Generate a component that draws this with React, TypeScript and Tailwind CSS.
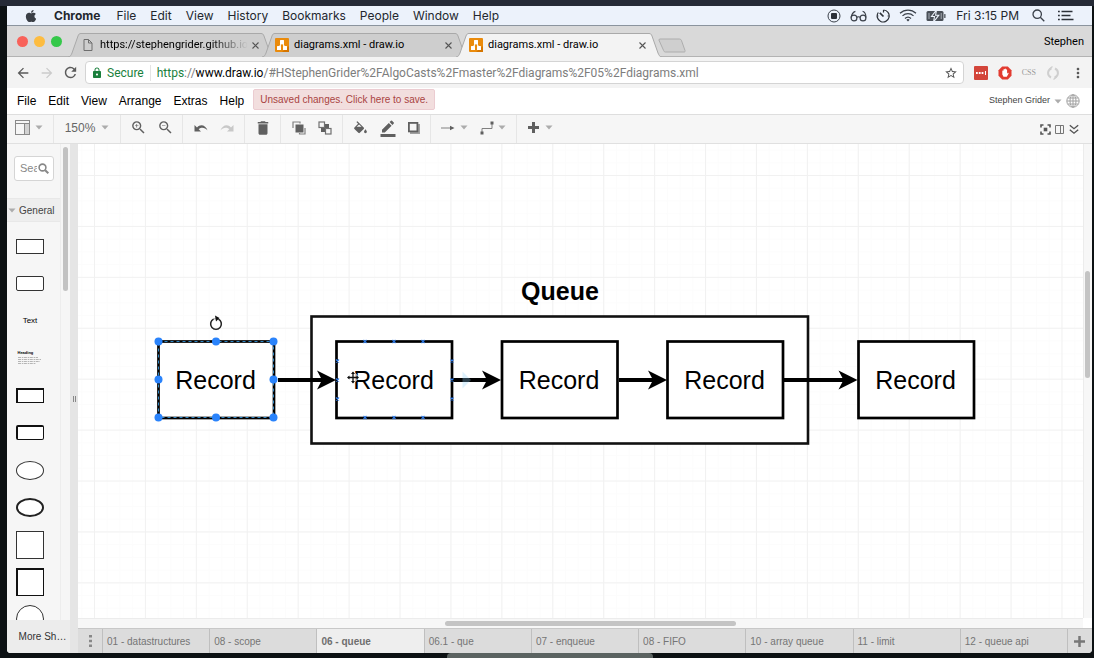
import React from "react";
import { FaApple } from "react-icons/fa";
import {
  MdDelete,
  MdZoomIn,
  MdZoomOut,
  MdBorderColor,
  MdLock,
  MdStarBorder,
  MdRefresh,
  MdArrowBack,
  MdArrowForward,
  MdMoreVert,
} from "react-icons/md";

const menuItems = ["File", "Edit", "View", "History", "Bookmarks", "People", "Window", "Help"];
const appMenu = ["File", "Edit", "View", "Arrange", "Extras", "Help"];
const pages = [
  "01 - datastructures",
  "08 - scope",
  "06 - queue",
  "06.1 - que",
  "07 - enqueue",
  "08 - FIFO",
  "10 - array queue",
  "11 - limit",
  "12 - queue api",
];

function Caret() {
  return (
    <svg width="8" height="5" viewBox="0 0 8 5" className="shrink-0 fill-[#acacac]">
      <path d="M0.5 0.5h7L4 4.5z" />
    </svg>
  );
}

function RecordIcon() {
  return (
    <svg width="14" height="14" viewBox="0 0 14 14" fill="none" stroke="#3b414a">
      <circle cx="7" cy="7" r="6" />
      <rect x="4" y="4" width="6" height="6" rx="1" fill="#2c3138" stroke="none" />
    </svg>
  );
}

function GlassesIcon() {
  return (
    <svg width="17" height="12" viewBox="0 0 17 12" fill="none" stroke="#3b414a" strokeWidth="1.2">
      <circle cx="4" cy="8" r="2.9" />
      <circle cx="13" cy="8" r="2.9" />
      <path d="M6.8 7.4c.8-.9 2.6-.9 3.4 0M1.1 7.5C1.6 4.5 3 2 5.4 1.3M15.9 7.5c0-3-1-5.5-3.3-6.2" />
    </svg>
  );
}

function TimerIcon() {
  return (
    <svg width="14" height="14" viewBox="0 0 14 14" fill="none" stroke="#2c3138" strokeWidth="1.2">
      <path d="M7.5 1A6 6 0 1 1 2.3 3.5" />
      <path d="M7.5 1v2.6" />
      <path d="M3.8 3.8L7.5 7.5" strokeWidth="1.7" />
      <path d="M1 7h1.5M11.5 7h1.5" strokeWidth="0.8" />
    </svg>
  );
}

function WifiIcon() {
  return (
    <svg width="18" height="13" viewBox="0 0 18 13" fill="none" stroke="#3b414a" strokeWidth="1.3">
      <path d="M1 4.3a11.5 11.5 0 0 1 16 0M3.5 6.9a8 8 0 0 1 11 0M6 9.4a4.5 4.5 0 0 1 6 0" />
      <path d="M7.3 10.8a2.5 2.5 0 0 1 3.4 0L9 12.6z" fill="#3b414a" stroke="none" />
    </svg>
  );
}

function BatteryIcon() {
  return (
    <svg width="20" height="12" viewBox="0 0 20 12">
      <rect x="0.5" y="1" width="17" height="10" rx="1.5" fill="#4a5058" />
      <rect x="18.2" y="4" width="1.3" height="4" rx="0.6" fill="#4a5058" />
      <path d="M10.5 0L5.5 6.5h3L7.5 12l5.3-6.8H9.6z" fill="#4a5058" stroke="#ecf2fb" strokeWidth="1.1" />
      <path d="M3 3v6M15.2 3v6" stroke="#a9afb7" strokeWidth="1" />
    </svg>
  );
}

function ListIcon() {
  return (
    <svg width="16" height="11" viewBox="0 0 16 11" fill="none" stroke="#2c3138" strokeWidth="1.5">
      <path d="M0 1.5h1.8M3.5 1.5h11M0 5.5h1.8M3.5 5.5h9M0 9.5h1.8M3.5 9.5h12" />
    </svg>
  );
}

function SystemBar() {
  return (
    <header className="flex h-5 shrink-0 items-center justify-between border-b border-[#8b949e] bg-[#ecf2fb] pl-[17px] pr-[18px] font-['Inter','Liberation_Sans',sans-serif] text-xs text-[#23272e]">
      <div className="flex items-center gap-4">
        <FaApple size={14} className="text-[#3a3f46]" />
        <button className="font-bold">Chrome</button>
        <nav aria-label="System" className="flex items-center gap-[14px]">
          {menuItems.map((m) => (
            <button key={m}>{m}</button>
          ))}
        </nav>
      </div>
      <div className="flex items-center gap-[10px]">
        <div className="flex items-center gap-[9px]">
          <RecordIcon />
          <GlassesIcon />
          <TimerIcon />
          <WifiIcon />
          <BatteryIcon />
        </div>
        <div className="flex items-center gap-[13px]">
          <span>Fri 3:15 PM</span>
          <svg width="13" height="13" viewBox="0 0 13 13" fill="none" stroke="#3b414a" strokeWidth="1.3">
            <circle cx="5.2" cy="5.2" r="4.2" />
            <path d="M8.3 8.3l4 4" />
          </svg>
          <ListIcon />
        </div>
      </div>
    </header>
  );
}

function DrawLogo() {
  return (
    <svg width="14" height="14" viewBox="0 0 14 14" className="shrink-0">
      <rect width="14" height="14" rx="1" fill="#ea8b0c" />
      <path d="M7 14l7-6v6z" fill="#d57500" />
      <path d="M7 4L4 10M7 4l3 6" stroke="#fff" strokeWidth="1.2" />
      <rect x="5" y="2" width="4" height="4" rx="0.5" fill="#fff" />
      <rect x="2" y="8" width="4" height="4" rx="0.5" fill="#fff" />
      <rect x="8" y="8" width="4" height="4" rx="0.5" fill="#fff" />
    </svg>
  );
}

function FileIcon() {
  return (
    <svg width="14" height="14" viewBox="0 0 14 14" fill="none" stroke="#6e6e6e" className="shrink-0">
      <path d="M3 1.5h4.5l3.5 3.5v7.5H3z M7.5 1.5v3.5h3.5" />
    </svg>
  );
}

function BrowserTab({ title, file, active }: { title: string; file?: boolean; active?: boolean }) {
  return (
    <div className={active ? "relative z-10 -mr-3 h-6 w-[206px]" : "relative -mr-3 h-6 w-[206px]"}>
      <svg
        viewBox="0 0 206 24"
        preserveAspectRatio="none"
        className="absolute inset-0 h-full w-full"
        fill={active ? "#f3f3f3" : "#cecece"}
        stroke="#a9a9a9"
      >
        <path d="M0 24C3 23.5 3 22 4 20L10 3C10.7 1 11.5 0.5 13 0.5H193C194.5 0.5 195.3 1 196 3L202 20C203 22 203 23.5 206 24" />
      </svg>
      <div className="relative flex h-full items-center pl-[13px] pr-[16px]">
        {file ? <FileIcon /> : <DrawLogo />}
        <button
          className={
            file
              ? "ml-[5px] flex-1 bg-linear-to-r from-black from-75% to-transparent bg-clip-text text-left whitespace-nowrap text-transparent"
              : "ml-[5px] flex-1 text-left whitespace-nowrap text-black"
          }
        >
          {title}
        </button>
        <button aria-label={"Close " + title} className="ml-1">
          <svg width="7" height="7" viewBox="0 0 7 7" stroke="#555" strokeWidth="1.1">
            <path d="M0.5 0.5l6 6M6.5 0.5l-6 6" />
          </svg>
        </button>
      </div>
    </div>
  );
}

function TabStrip() {
  return (
    <div className="flex h-[31px] shrink-0 items-end border-b border-[#b3b3b3] bg-[#d9d9d9] font-['Roboto','Liberation_Sans',sans-serif] text-[11px]">
      <div className="flex items-center gap-[6px] self-center pl-[10px]">
        <button aria-label="Close" className="size-[11px] rounded-full bg-[#f8625a]" />
        <button aria-label="Minimise" className="size-[11px] rounded-full bg-[#fdbc40]" />
        <button aria-label="Zoom" className="size-[11px] rounded-full bg-[#35c84a]" />
      </div>
      <div className="-mb-px ml-[6px] flex">
        <BrowserTab title="https://stephengrider.github.io" file />
        <BrowserTab title="diagrams.xml - draw.io" />
        <BrowserTab title="diagrams.xml - draw.io" active />
      </div>
      <button aria-label="New tab" className="mb-[3px] ml-2">
        <svg width="28" height="15" viewBox="0 0 28 15" fill="#cfcfcf" stroke="#adadad">
          <path d="M1.5 1H21.5C22.5 1 23 1.5 23.4 2.3L27 12.5C27.3 13.5 27 14 26 14H7.5C6.5 14 6 13.5 5.6 12.5L0.9 2Z" />
        </svg>
      </button>
      <span className="mr-2 mb-2 ml-auto leading-3 text-black">Stephen</span>
    </div>
  );
}

function AddressRow() {
  return (
    <div className="flex h-[31px] shrink-0 items-center bg-[#f3f3f3] pr-[6px] pl-2 font-['Roboto','Liberation_Sans',sans-serif] text-xs">
      <button aria-label="Back" className="text-[#5a5a5a]">
        <MdArrowBack size={16} />
      </button>
      <button aria-label="Forward" className="ml-2 text-[#cbcbcb]">
        <MdArrowForward size={16} />
      </button>
      <button aria-label="Reload" className="ml-[7px] text-[#5a5a5a]">
        <MdRefresh size={17} />
      </button>
      <div className="ml-[6px] flex h-[23px] min-w-0 flex-1 items-center rounded-sm border border-[#d4d4d4] bg-white px-[5px]">
        <MdLock size={12} className="shrink-0 text-[#1a7f3c]" />
        <span className="ml-1 text-[#1a7f3c]">Secure</span>
        <span className="mx-[6px] h-4 w-px bg-[#e4e4e4]" />
        <div
          role="textbox"
          aria-label="Address"
          contentEditable
          suppressContentEditableWarning
          className="min-w-0 flex-1 overflow-hidden whitespace-nowrap text-[#7d7d7d] outline-none"
        >
          <span className="text-[#1a7f3c]">https</span>://<span className="text-black">www.draw.io</span>
          /#HStephenGrider%2FAlgoCasts%2Fmaster%2Fdiagrams%2F05%2Fdiagrams.xml
        </div>
        <button aria-label="Bookmark this page" className="text-[#555]">
          <MdStarBorder size={14} />
        </button>
      </div>
      <div className="ml-[10px] flex items-center gap-[10px]">
        <button aria-label="Password manager">
          <svg width="14" height="14" viewBox="0 0 14 14">
            <rect width="14" height="14" rx="1" fill="#d3453a" />
            <path d="M2 6h1.8v2H2zM4.8 6h1.8v2H4.8zM7.6 6h1.8v2H7.6zM11 5h1v4h-1z" fill="#fff" />
          </svg>
        </button>
        <button aria-label="Ad blocker">
          <svg width="14" height="14" viewBox="0 0 14 14">
            <path d="M4.2 0.5h5.6l3.7 3.7v5.6l-3.7 3.7H4.2L0.5 9.8V4.2z" fill="#e23b30" />
            <path
              d="M4.3 8.5V4.8q.6-.8 1.2 0V6.5V3.5q.6-.8 1.2 0V6V3q.6-.8 1.2 0V6V3.7q.6-.8 1.2 0V7.7l.8-.9q.9-.2.7.6L8.8 10.8H5.5z"
              fill="#fff"
            />
          </svg>
        </button>
        <button className="font-['Liberation_Serif',serif] text-[8px] leading-3 text-[#999]">CSS</button>
        <button aria-label="Sync">
          <svg width="14" height="14" viewBox="0 0 14 14" fill="none" stroke="#cfcfcf" strokeWidth="2">
            <path d="M5 11.5C1 9.5 1 4 5.5 2.2M9 2.5c4 2 4 7.5-.5 9.3" />
            <path d="M6.5 0.5L3.5 3M7.5 13.5l3-2.5" strokeWidth="1.3" />
          </svg>
        </button>
        <button aria-label="Chrome menu" className="text-[#555]">
          <MdMoreVert size={16} />
        </button>
      </div>
    </div>
  );
}

function AppMenu() {
  return (
    <div className="flex h-[27px] shrink-0 items-center border-b border-[#dedede] bg-white pl-[10px] pr-3">
      <nav aria-label="Editor" className="flex gap-3 text-xs text-black">
        {appMenu.map((m) => (
          <button key={m}>{m}</button>
        ))}
      </nav>
      <button className="mb-[3px] ml-[9px] h-[21px] rounded-xs border border-[#ebccd1] bg-[#f2dede] px-[6px] text-[10px] text-[#a94442]">
        Unsaved changes. Click here to save.
      </button>
      <button className="ml-auto flex items-center gap-1 text-[9px] text-[#444]">
        Stephen Grider <Caret />
      </button>
      <button aria-label="Language" className="ml-1">
        <svg width="14" height="14" viewBox="0 0 14 14" fill="none" stroke="#a0a0a0">
          <circle cx="7" cy="7" r="6.2" />
          <ellipse cx="7" cy="7" rx="3" ry="6.2" />
          <path d="M1 7h12M1.8 4h10.4M1.8 10h10.4M7 1v12" />
        </svg>
      </button>
    </div>
  );
}

function Group({ className, children }: { className: string; children: React.ReactNode }) {
  return <div className={"flex h-full items-center border-r border-[#e6e6e6] pb-[3px] " + className}>{children}</div>;
}

function Toolbar() {
  return (
    <div className="flex h-[29px] shrink-0 items-center border-b border-[#e0e0e0] bg-[#f6f6f6] text-[#606060]">
      <Group className="w-[47px] pl-2">
        <button aria-label="View" className="flex items-center gap-[5px]">
          <svg width="15" height="15" viewBox="0 0 15 15" fill="none" stroke="#8a8a8a">
            <rect x="0.5" y="0.5" width="14" height="14" />
            <path d="M0.5 3.5h14" />
            <rect x="9.5" y="3.5" width="5" height="11" fill="#d2d2d2" />
          </svg>
          <Caret />
        </button>
      </Group>
      <Group className="w-[67px] justify-center">
        <button className="flex items-center gap-[6px] text-xs text-[#666]">
          150% <Caret />
        </button>
      </Group>
      <Group className="w-[62px] justify-center gap-[10px]">
        <button aria-label="Zoom in">
          <MdZoomIn size={17} />
        </button>
        <button aria-label="Zoom out">
          <MdZoomOut size={17} />
        </button>
      </Group>
      <Group className="w-[62px] justify-center gap-3">
        <button aria-label="Undo">
          <svg width="14" height="10" viewBox="0 0 14 10" fill="#606060">
            <path d="M0.5 2v6.5H7L4.7 6.3C7.5 3.8 11 4.5 13.5 7.5C12 2.5 6.5 0.5 3 4.5z" />
          </svg>
        </button>
        <button aria-label="Redo">
          <svg width="14" height="10" viewBox="0 0 14 10" fill="#c8c8c8">
            <path d="M13.5 2v6.5H7l2.3-2.2C6.5 3.8 3 4.5 0.5 7.5C2 2.5 7.5 0.5 11 4.5z" />
          </svg>
        </button>
      </Group>
      <Group className="w-9 justify-center">
        <button aria-label="Delete">
          <MdDelete size={18} />
        </button>
      </Group>
      <Group className="w-[62px] justify-center gap-3">
        <button aria-label="To front">
          <svg width="14" height="14" viewBox="0 0 14 14">
            <rect x="3.5" y="3.5" width="8" height="8" fill="#606060" />
            <path d="M1 7V1h7v1.5M13 7v6H7.5v-1" fill="none" stroke="#808080" strokeWidth="1.2" />
          </svg>
        </button>
        <button aria-label="To back">
          <svg width="14" height="14" viewBox="0 0 14 14">
            <rect x="3" y="3" width="8" height="8" fill="#606060" />
            <rect x="1" y="1" width="5.5" height="5.5" fill="#f6f6f6" stroke="#707070" strokeWidth="1.2" />
            <rect x="7.5" y="7.5" width="5.5" height="5.5" fill="#f6f6f6" stroke="#707070" strokeWidth="1.2" />
          </svg>
        </button>
      </Group>
      <Group className="w-[88px] justify-center gap-[10px]">
        <button aria-label="Fill colour">
          <svg width="17" height="17" viewBox="0 0 24 24" fill="currentColor">
            <path
              transform="translate(0 3)"
              d="M16.56 8.94L7.62 0 6.21 1.41l2.38 2.38-5.15 5.15a1.49 1.49 0 0 0 0 2.12l5.5 5.5c.29.29.68.44 1.06.44s.77-.15 1.06-.44l5.5-5.5c.59-.58.59-1.53 0-2.12zM6.5 8L10 4.8 13.5 8zM19 11.5s-2 2.17-2 3.5c0 1.1.9 2 2 2s2-.9 2-2c0-1.33-2-3.5-2-3.5z"
            />
          </svg>
        </button>
        <button aria-label="Line colour">
          <MdBorderColor size={18} />
        </button>
        <button aria-label="Shadow">
          <svg width="14" height="14" viewBox="0 0 14 14">
            <rect x="3" y="3" width="10" height="10" fill="#a0a0a0" />
            <rect x="1.9" y="1.9" width="8.5" height="8.5" fill="#f6f6f6" stroke="#606060" strokeWidth="1.8" />
          </svg>
        </button>
      </Group>
      <Group className="w-[86px] justify-center gap-3">
        <button aria-label="Connection" className="flex items-center gap-[5px]">
          <svg width="14" height="6" viewBox="0 0 14 6">
            <path d="M0 3h10" stroke="#808080" />
            <path d="M9 0.8L13.5 3L9 5.2z" fill="#606060" />
          </svg>
          <Caret />
        </button>
        <button aria-label="Waypoints" className="flex items-center gap-1">
          <svg width="14" height="14" viewBox="0 0 14 14">
            <path d="M2 11V7.5h10V3" fill="none" stroke="#808080" />
            <rect x="0.5" y="10.5" width="3" height="3" fill="#606060" />
            <rect x="10.5" y="0.5" width="3" height="3" fill="#606060" />
          </svg>
          <Caret />
        </button>
      </Group>
      <button aria-label="Insert" className="ml-[10px] flex h-full items-center gap-[5px] pb-[3px]">
        <svg width="13" height="13" viewBox="0 0 13 13" stroke="#606060" strokeWidth="3">
          <path d="M6.5 1v11M1 6.5h11" />
        </svg>
        <Caret />
      </button>
      <div className="mr-[13px] ml-auto flex items-center gap-1">
        <button aria-label="Fullscreen">
          <svg width="11" height="11" viewBox="0 0 11 11" fill="none" stroke="#555" strokeWidth="1.6">
            <path d="M1 3.5V1h2.5M7.5 1H10v2.5M10 7.5V10H7.5M3.5 10H1V7.5" />
            <rect x="3.7" y="3.7" width="3.6" height="3.6" fill="#555" stroke="none" />
          </svg>
        </button>
        <button aria-label="Format panel">
          <svg width="10" height="11" viewBox="0 0 10 11" fill="none" stroke="#777">
            <path d="M0.5 1.5h8v8h-8zM5.5 1.5v8" />
          </svg>
        </button>
        <button aria-label="Collapse">
          <svg width="10" height="11" viewBox="0 0 10 11" fill="none" stroke="#555" strokeWidth="1.4">
            <path d="M0.8 1.2L5 4.7L9.2 1.2M0.8 5.7L5 9.2L9.2 5.7" />
          </svg>
        </button>
      </div>
    </div>
  );
}

function Sidebar() {
  return (
    <aside className="flex w-[63px] shrink-0 flex-col bg-[#f6f6f6]">
      <div className="flex min-h-0 flex-1">
        <div className="flex w-[54px] flex-col overflow-hidden border-r border-[#ededed]">
          <div className="mt-3 ml-[7px] flex h-[25px] w-10 shrink-0 items-center rounded-[3px] border border-[#d5d5d5] bg-white pr-1 pl-[5px]">
            <input
              aria-label="Search shapes"
              placeholder="Search Shapes"
              className="w-[17px] min-w-0 text-[11px] outline-none placeholder:text-[#888]"
            />
            <svg width="11" height="11" viewBox="0 0 11 11" fill="none" stroke="#888" strokeWidth="1.6" className="ml-px shrink-0">
              <circle cx="4.5" cy="4.5" r="3.4" />
              <path d="M7.2 7.2L10.3 10.3" strokeWidth="2" />
            </svg>
          </div>
          <button className="mt-[17px] flex h-6 shrink-0 items-center gap-[3px] border-y border-[#e8e8e8] bg-[#eeeeee] pl-px text-[10px] text-[#444]">
            <Caret />
            General
          </button>
          <div className="mt-[6px] grid h-[410px] shrink-0 grid-rows-11 items-center pl-[9px]">
            <div className="h-[15px] w-7 border border-[#333] bg-white" />
            <div className="h-[15px] w-7 rounded-xs border border-[#333] bg-white" />
            <div className="w-7 text-center text-[8px] leading-3 text-black">Text</div>
            <svg width="28" height="16" viewBox="0 0 28 16">
              <text x="1.5" y="4" className="fill-black font-bold text-[4px]">
                Heading
              </text>
              <path
                d="M2 7.5h20M2 9.5h23M2 11.5h22M2 13.5h18"
                stroke="#999"
                strokeWidth="0.7"
                strokeDasharray="3 0.8 1.5 0.6"
              />
            </svg>
            <div className="h-[15px] w-7 border border-t-2 border-l-2 border-[#111] bg-white" />
            <div className="h-[15px] w-7 rounded-xs border border-t-2 border-l-2 border-[#111] bg-white" />
            <div className="h-[19px] w-7 rounded-[50%] border border-[#333] bg-white" />
            <div className="h-[19px] w-7 rounded-[50%] border-2 border-[#222] bg-white" />
            <div className="size-7 border border-[#333] bg-white" />
            <div className="size-7 border border-t-2 border-l-2 border-[#111] bg-white" />
            <div className="size-7 rounded-full border border-[#333] bg-white" />
          </div>
        </div>
        <div className="flex-1 px-[2px] pt-[3px]">
          <div className="h-36 w-[5px] rounded-full bg-[#c2c2c2]" />
        </div>
      </div>
      <button className="h-[33px] shrink-0 bg-[#ececec] pl-2 text-[10px] whitespace-nowrap text-[#333]">More Sh…</button>
    </aside>
  );
}

const boxes = [80.5, 258.5, 424, 589.5, 780.5];
const connectors = [
  [200, 258],
  [375, 423],
  [541, 589],
  [706, 779.5],
];
const handles = [
  [80.5, 197.5],
  [138, 197.5],
  [195.5, 197.5],
  [80.5, 235.5],
  [195.5, 235.5],
  [80.5, 273.5],
  [138, 273.5],
  [195.5, 273.5],
];
const anchors = [
  [287, 197.5],
  [316, 197.5],
  [345, 197.5],
  [287, 273.5],
  [316, 273.5],
  [345, 273.5],
  [259.5, 217],
  [259.5, 236],
  [259.5, 255],
  [374, 217],
  [374, 236],
  [374, 255],
];

function Diagram() {
  return (
    <svg className="block h-full w-full font-['Liberation_Sans',sans-serif]">
      <defs>
        <pattern id="minor" width="12.73" height="12.73" x="16" y="31" patternUnits="userSpaceOnUse">
          <path d="M0.5 0V12.73M0 0.5H12.73" stroke="#fcfcfc" fill="none" />
        </pattern>
        <pattern id="major" width="50.92" height="50.92" x="16" y="31" patternUnits="userSpaceOnUse">
          <path d="M0.5 0V50.92M0 0.5H50.92" stroke="#f1f1f1" fill="none" />
        </pattern>
      </defs>
      <rect width="100%" height="100%" fill="url(#minor)" />
      <rect width="100%" height="100%" fill="url(#major)" />

      <text x="482" y="156" textAnchor="middle" className="text-[25px] font-bold">
        Queue
      </text>
      <rect x="233.5" y="172.5" width="496.5" height="127" fill="#fff" stroke="#111" strokeWidth="2.6" />

      {boxes.map((x) => (
        <g key={x}>
          <rect x={x} y="197.5" width="115.5" height="76.5" fill="#fff" stroke="#000" strokeWidth="2.7" />
          <text x={x + 57} y="245" textAnchor="middle" className="text-[25px]">
            Record
          </text>
        </g>
      ))}

      {connectors.map(([from, to]) => (
        <g key={from}>
          <path d={`M${from} 236H${to - 12}`} stroke="#000" strokeWidth="3.8" />
          <path d={`M${to} 236L${to - 19} 245.5L${to - 14} 236L${to - 19} 226.5Z`} />
        </g>
      ))}
      <path d="M384.5 227.5L393 236L384.5 244.5Z" fill="#8fd0f8" opacity="0.3" />

      <rect x="80.5" y="197.5" width="115" height="76" fill="none" stroke="#2f86c4" strokeWidth="1" strokeDasharray="3 3" />
      {handles.map(([x, y]) => (
        <circle key={`${x}-${y}`} cx={x} cy={y} r="4" fill="#2a83fb" />
      ))}
      {anchors.map(([x, y]) => (
        <path key={`${x}-${y}`} d={`M${x - 1.5} ${y - 1.5}l3 3m0 -3l-3 3`} stroke="#2f7be8" strokeWidth="1.1" />
      ))}

      <g fill="none" stroke="#222">
        <circle cx="138" cy="180" r="5.4" stroke="#b5b5b5" strokeWidth="1.5" />
        <path d="M140.5 175.2A5.4 5.4 0 1 1 135.5 175.2" strokeWidth="1.4" />
        <path d="M137 171.5L141.5 174L138 177.5Z" fill="#111" stroke="none" />
      </g>

      <g>
        <circle cx="275" cy="233.5" r="5" fill="#fff" opacity="0.7" />
        <path d="M275 228.5v10M270 233.5h10" stroke="#111" strokeWidth="1.3" />
        <path
          d="M275 227.5l2 2.5h-4zM275 239.5l2-2.5h-4zM269 233.5l2.5-2v4zM281 233.5l-2.5-2v4z"
          fill="#111"
        />
      </g>
    </svg>
  );
}

function PageTabs() {
  return (
    <div className="flex h-[25px] shrink-0 border-t border-[#c8c8c8] bg-[#dcdcdc] text-[10px] text-[#757575]">
      <button aria-label="Pages" className="flex w-[25px] shrink-0 items-center justify-center border-r border-[#bfbfbf]">
        <svg width="3" height="12" viewBox="0 0 3 12" fill="#888">
          <path d="M0 0h3v2.5H0zM0 4.7h3v2.5H0zM0 9.4h3v2.5H0z" />
        </svg>
      </button>
      {pages.map((p) => (
        <button
          key={p}
          className={
            p === "06 - queue"
              ? "min-w-0 flex-1 truncate border-r border-[#bfbfbf] bg-[#eeeeee] pl-1 text-left font-bold text-[#6e6e6e]"
              : "min-w-0 flex-1 truncate border-r border-[#bfbfbf] pl-1 text-left"
          }
        >
          {p}
        </button>
      ))}
      <button aria-label="Add page" className="flex w-6 shrink-0 items-center justify-center">
        <svg width="11" height="11" viewBox="0 0 11 11" stroke="#777" strokeWidth="2.5">
          <path d="M5.5 0v11M0 5.5h11" />
        </svg>
      </button>
    </div>
  );
}

export default function App() {
  return (
    <div className="flex h-screen flex-col bg-[#0c1113] pr-[2px] pl-[7px] font-['Liberation_Sans',Arial,sans-serif]">
      <div className="-mr-[2px] -ml-[7px] h-[6px] shrink-0 bg-[#252a36]" />
      <div className="flex min-h-0 flex-1 flex-col overflow-hidden rounded-b bg-white">
        <SystemBar />
        <TabStrip />
        <AddressRow />
        <AppMenu />
        <Toolbar />
        <main className="flex min-h-0 flex-1">
          <Sidebar />
          <div className="flex w-2 shrink-0 items-center justify-center bg-[#e5e5e5]">
            <span className="flex gap-px">
              <span className="h-[6px] w-px bg-[#888]" />
              <span className="h-[6px] w-px bg-[#888]" />
            </span>
          </div>
          <div className="flex min-w-0 flex-1 flex-col">
            <div className="flex min-h-0 flex-1">
              <div className="min-w-0 flex-1 overflow-hidden bg-white">
                <Diagram />
              </div>
              <div className="flex w-[9px] shrink-0 flex-col border-l border-[#ececec] bg-[#f7f7f7] px-px">
                <div className="grow-[127]" />
                <div className="w-[5px] grow-[107] rounded-full bg-[#c4c4c4]" />
                <div className="grow-[240]" />
              </div>
            </div>
            <div className="mr-[9px] h-[10px] shrink-0 border-t border-[#ececec] bg-[#f7f7f7] pt-[2px]">
              <div className="ml-[36.5%] h-[5px] w-[29%] rounded-full bg-[#c4c4c4]" />
            </div>
            <PageTabs />
          </div>
        </main>
      </div>
      <div className="flex h-[5px] shrink-0 justify-center">
        <div className="w-[206px] rounded-t bg-[#5b6361]" />
      </div>
    </div>
  );
}
